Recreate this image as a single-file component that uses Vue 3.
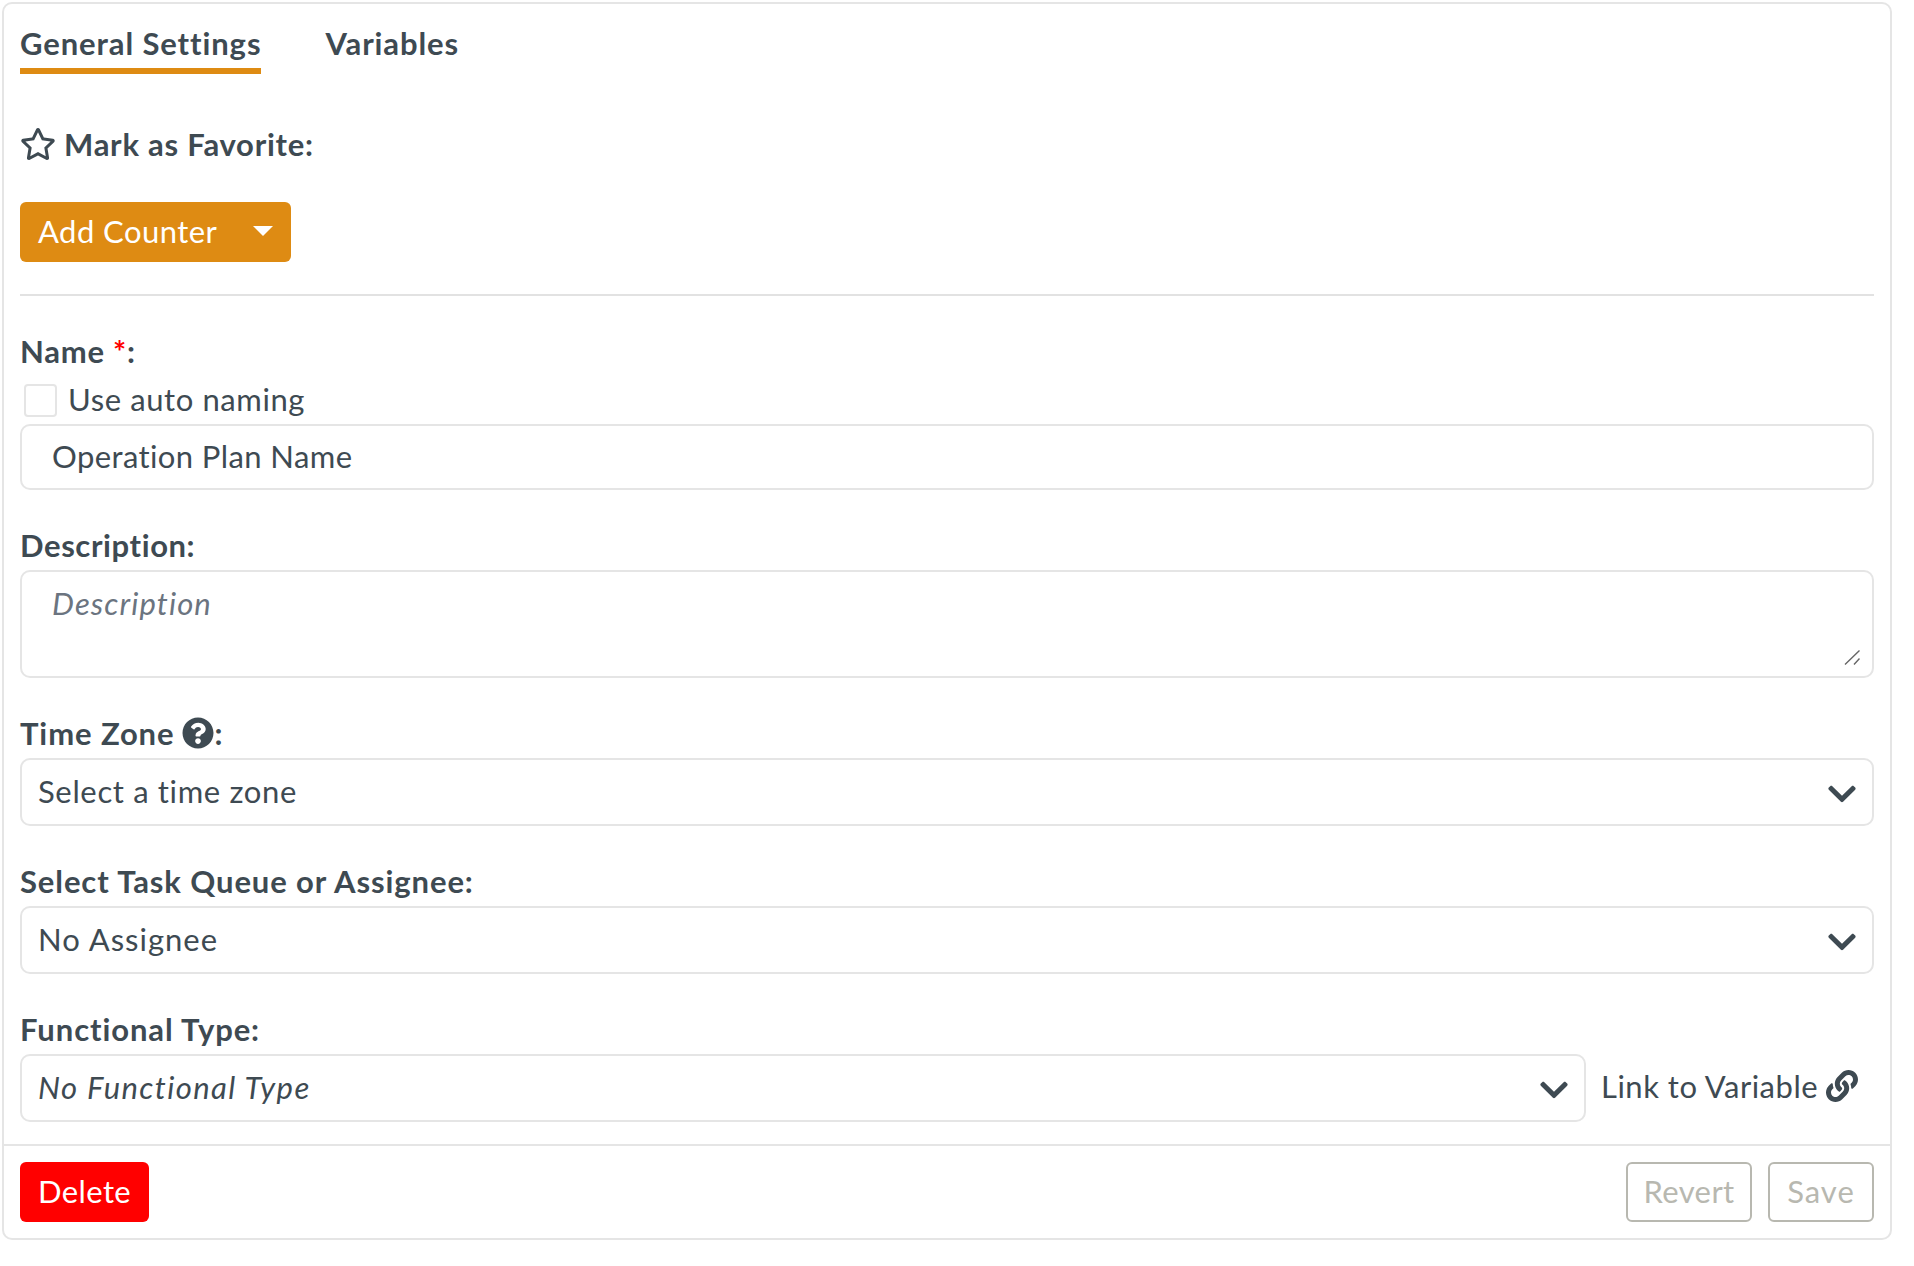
<script setup>
const star = "M528.1 171.5L382 150.2 316.7 17.8c-11.7-23.6-45.6-23.9-57.4 0L194 150.2 47.9 171.5c-26.2 3.8-36.7 36.1-17.7 54.6l105.7 103-25 145.5c-4.5 26.3 23.2 46 46.4 33.7L288 439.6l130.7 68.7c23.2 12.2 50.9-7.4 46.4-33.7l-25-145.5 105.7-103c19-18.5 8.5-50.8-17.7-54.6zM388.6 312.3l23.7 138.4L288 385.4l-124.3 65.3 23.7-138.4-100.6-98 139-20.2 62.2-126 62.2 126 139 20.2-100.6 98z"
const chevron = "M207.029 381.476L12.686 187.132c-9.373-9.373-9.373-24.569 0-33.941l22.667-22.667c9.357-9.357 24.522-9.375 33.901-.04L224 284.505l154.745-154.021c9.379-9.335 24.544-9.317 33.901.04l22.667 22.667c9.373 9.373 9.373 24.569 0 33.941L240.971 381.476c-9.373 9.372-24.569 9.372-33.942 0z"
const question = "M504 256c0 136.997-111.043 248-248 248S8 392.997 8 256C8 119.083 119.043 8 256 8s248 111.083 248 248zM262.655 90c-54.497 0-89.255 22.957-116.549 63.758-3.536 5.286-2.353 12.415 2.715 16.258l34.699 26.31c5.205 3.947 12.621 3.008 16.665-2.122 17.864-22.658 30.113-35.797 57.303-35.797 20.429 0 45.698 13.148 45.698 32.958 0 14.976-12.363 22.667-32.534 33.976C247.128 238.528 216 254.941 216 296v4c0 6.627 5.373 12 12 12h56c6.627 0 12-5.373 12-12v-1.333c0-28.462 83.186-29.647 83.186-106.667 0-58.002-60.165-102-116.531-102zM256 338c-25.365 0-46 20.635-46 46 0 25.364 20.635 46 46 46s46-20.636 46-46c0-25.365-20.635-46-46-46z"
const link = "M326.612 185.391c59.747 59.809 58.927 155.698.36 214.59-.11.12-.24.25-.36.37l-67.2 67.2c-59.27 59.27-155.699 59.262-214.96 0-59.27-59.26-59.27-155.7 0-214.96l37.106-37.106c9.84-9.84 26.786-3.3 27.294 10.606.648 17.722 3.826 35.527 9.69 52.721 1.986 5.822.567 12.262-3.783 16.612l-13.087 13.087c-28.026 28.026-28.905 73.66-1.155 101.96 28.024 28.579 74.086 28.749 102.325.51l67.2-67.19c28.191-28.191 28.073-73.757 0-101.83-3.701-3.694-7.429-6.564-10.341-8.569a16.037 16.037 0 0 1-6.947-12.606c-.396-10.567 3.348-21.456 11.698-29.806l21.054-21.055c5.521-5.521 14.182-6.199 20.584-1.731a152.482 152.482 0 0 1 20.522 17.197zM467.547 44.449c-59.261-59.262-155.69-59.27-214.96 0l-67.2 67.2c-.12.12-.25.25-.36.37-58.566 58.892-59.387 154.781.36 214.59a152.454 152.454 0 0 0 20.521 17.196c6.402 4.468 15.064 3.789 20.584-1.731l21.054-21.055c8.35-8.35 12.094-19.239 11.698-29.806a16.037 16.037 0 0 0-6.947-12.606c-2.912-2.005-6.64-4.875-10.341-8.569-28.073-28.073-28.191-73.639 0-101.83l67.2-67.19c28.239-28.239 74.3-28.069 102.325.51 27.75 28.3 26.872 73.934-1.155 101.96l-13.087 13.087c-4.35 4.35-5.769 10.79-3.783 16.612 5.864 17.194 9.042 34.999 9.69 52.721.509 13.906 17.454 20.446 27.294 10.606l37.106-37.106c59.271-59.259 59.271-155.699.001-214.959z"
</script>

<template>
  <div class="card">
    <div class="body">
      <div class="tabs">
        <span class="tab active">General Settings</span>
        <span class="tab">Variables</span>
      </div>
      <div class="favorite">
        <svg class="star" viewBox="0 0 576 512"><path :d="star" /></svg>
        <span class="label fav-text">Mark as Favorite:</span>
      </div>
      <button class="btn orange">
        <span>Add Counter</span>
        <span class="caret"></span>
      </button>
      <div class="rule"></div>

      <div class="label name-label">Name <span class="req">*</span>:</div>
      <label class="check">
        <span class="box"></span>
        <span>Use auto naming</span>
      </label>
      <input class="input" value="Operation Plan Name" />

      <div class="label desc-label">Description:</div>
      <div class="area-wrap">
        <textarea class="input area" placeholder="Description"></textarea>
        <svg class="grip" viewBox="0 0 16 15"><path d="M1 14.5L15.5 .5M10 14.5L15.5 8.5" /></svg>
      </div>

      <div class="label tz-label">
        <span>Time Zone</span>
        <svg class="q" viewBox="0 0 512 512"><path :d="question" /></svg><span class="colon">:</span>
      </div>
      <div class="select tz-select">
        <span>Select a time zone</span>
        <svg class="chev" viewBox="0 0 448 512"><path :d="chevron" /></svg>
      </div>

      <div class="label sel-label">Select Task Queue or Assignee:</div>
      <div class="select">
        <span>No Assignee</span>
        <svg class="chev" viewBox="0 0 448 512"><path :d="chevron" /></svg>
      </div>

      <div class="label sel-label">Functional Type:</div>
      <div class="row">
        <div class="select grow">
          <em class="type">No Functional Type</em>
          <svg class="chev" viewBox="0 0 448 512"><path :d="chevron" /></svg>
        </div>
        <div class="linkvar">
          <span>Link to Variable</span>
          <svg class="link" viewBox="0 0 512 512"><path :d="link" /></svg>
        </div>
      </div>
    </div>
    <div class="footer">
      <button class="btn red">Delete</button>
      <div class="actions">
        <button class="btn ghost revert">Revert</button>
        <button class="btn ghost save">Save</button>
      </div>
    </div>
  </div>
</template>

<style>
html, body { margin: 0; background: #fff; }
</style>

<style scoped>
.card {
  box-sizing: border-box;
  width: 1890px;
  height: 1238px;
  margin: 2px 0 0 2px;
  border: 2px solid #e5e5e5;
  border-radius: 10px;
  font-family: Lato, "Open Sans", sans-serif;
  font-size: 31px;
  letter-spacing: 0.4px;
  font-variant-ligatures: none;
  color: #3e4a52;
  display: flex;
  flex-direction: column;
}
.body { flex: 1; padding: 0 16px; min-height: 0; }
.tabs { display: flex; gap: 64px; height: 70px; }
.tab { box-sizing: border-box; height: 70px; padding-top: 17px; line-height: 44px; font-weight: 700; letter-spacing: 0.9px; white-space: nowrap; }
.tab.active { border-bottom: 6px solid #de8b13; }
.label { font-weight: 700; line-height: 40px; letter-spacing: 0.9px; white-space: nowrap; }
.fav-text { letter-spacing: 0.75px; }
.favorite { display: flex; align-items: center; gap: 8px; margin-top: 50px; height: 40px; }
.star { width: 36px; height: 32px; fill: #3e4a52; }
.btn { box-sizing: border-box; height: 60px; border-radius: 6px; font: inherit; letter-spacing: inherit; font-variant-ligatures: none; border: 0; padding: 0 18px 2px; white-space: nowrap; }
.orange { display: flex; align-items: center; justify-content: space-between; width: 271px; margin-top: 38px; background: #de8b13; color: #fff; letter-spacing: 0.45px; }
.caret { width: 0; height: 0; border: 10px solid transparent; border-top: 10px solid #fff; border-bottom: 0; }
.rule { height: 2px; background: #e2e2e2; margin-top: 32px; }
.name-label { margin-top: 36px; height: 40px; line-height: 38px; letter-spacing: 0.75px; }
.req { color: #f00; }
.check { display: flex; align-items: center; gap: 11px; box-sizing: border-box; height: 40px; padding: 0 0 2px 4px; margin-top: 8px; letter-spacing: 0.6px; }
.box { box-sizing: border-box; width: 33px; height: 33px; margin-top: 2px; border: 2px solid #e5e5e5; border-radius: 4px; }
.input {
  display: block; box-sizing: border-box; width: 100%; height: 66px;
  border: 2px solid #e5e5e5; border-radius: 10px; padding: 0 30px 2px;
  font: inherit; letter-spacing: inherit; font-variant-ligatures: none; color: inherit; outline: none; margin-top: 4px;
}
.area-wrap { position: relative; margin-top: 4px; height: 108px; }
.area { height: 108px; padding-top: 12px; margin-top: 0; resize: none; letter-spacing: 1.1px; }
.area::placeholder { font-style: italic; color: #6b7480; opacity: 1; }
.grip { position: absolute; right: 14px; bottom: 13px; width: 16px; height: 15px; fill: none; stroke: #666; stroke-width: 1.4; }
.desc-label { margin-top: 36px; height: 40px; line-height: 38px; letter-spacing: 0.6px; }
.tz-label { margin-top: 35px; height: 40px; display: flex; align-items: center; gap: 8px; }
.q { width: 32px; height: 32px; fill: #3e4a52; }
.colon { margin-left: -8px; }
.sel-label { margin-top: 35px; height: 40px; }
.select {
  box-sizing: border-box; height: 68px; border: 2px solid #e5e5e5; border-radius: 10px;
  padding: 0 16px 2px; margin-top: 5px; display: flex; align-items: center; justify-content: space-between;
  letter-spacing: 1px;
}
.tz-select { letter-spacing: 0.65px; }
.type { letter-spacing: 1.4px; }
.chev { width: 28px; height: 32px; margin-top: 6px; fill: #3e4a52; }
.row { display: flex; align-items: center; }
.grow { width: 1566px; flex: none; }
.linkvar { display: flex; align-items: center; gap: 8px; margin-left: 15px; white-space: nowrap; letter-spacing: 0.5px; }
.link { width: 32px; height: 32px; fill: #3e4a52; }
.footer {
  height: 94px; box-sizing: border-box; border-top: 2px solid #e5e5e5; padding: 16px 16px 0;
  display: flex; justify-content: space-between;
}
.red { background: #f00; color: #fff; width: 129px; }
.actions { display: flex; gap: 16px; }
.ghost { background: #fff; border: 2px solid #b8b8b0; color: #b8b8b0; padding: 0 0 2px; }
.revert { width: 126px; }
.save { width: 106px; letter-spacing: 1px; }
</style>
